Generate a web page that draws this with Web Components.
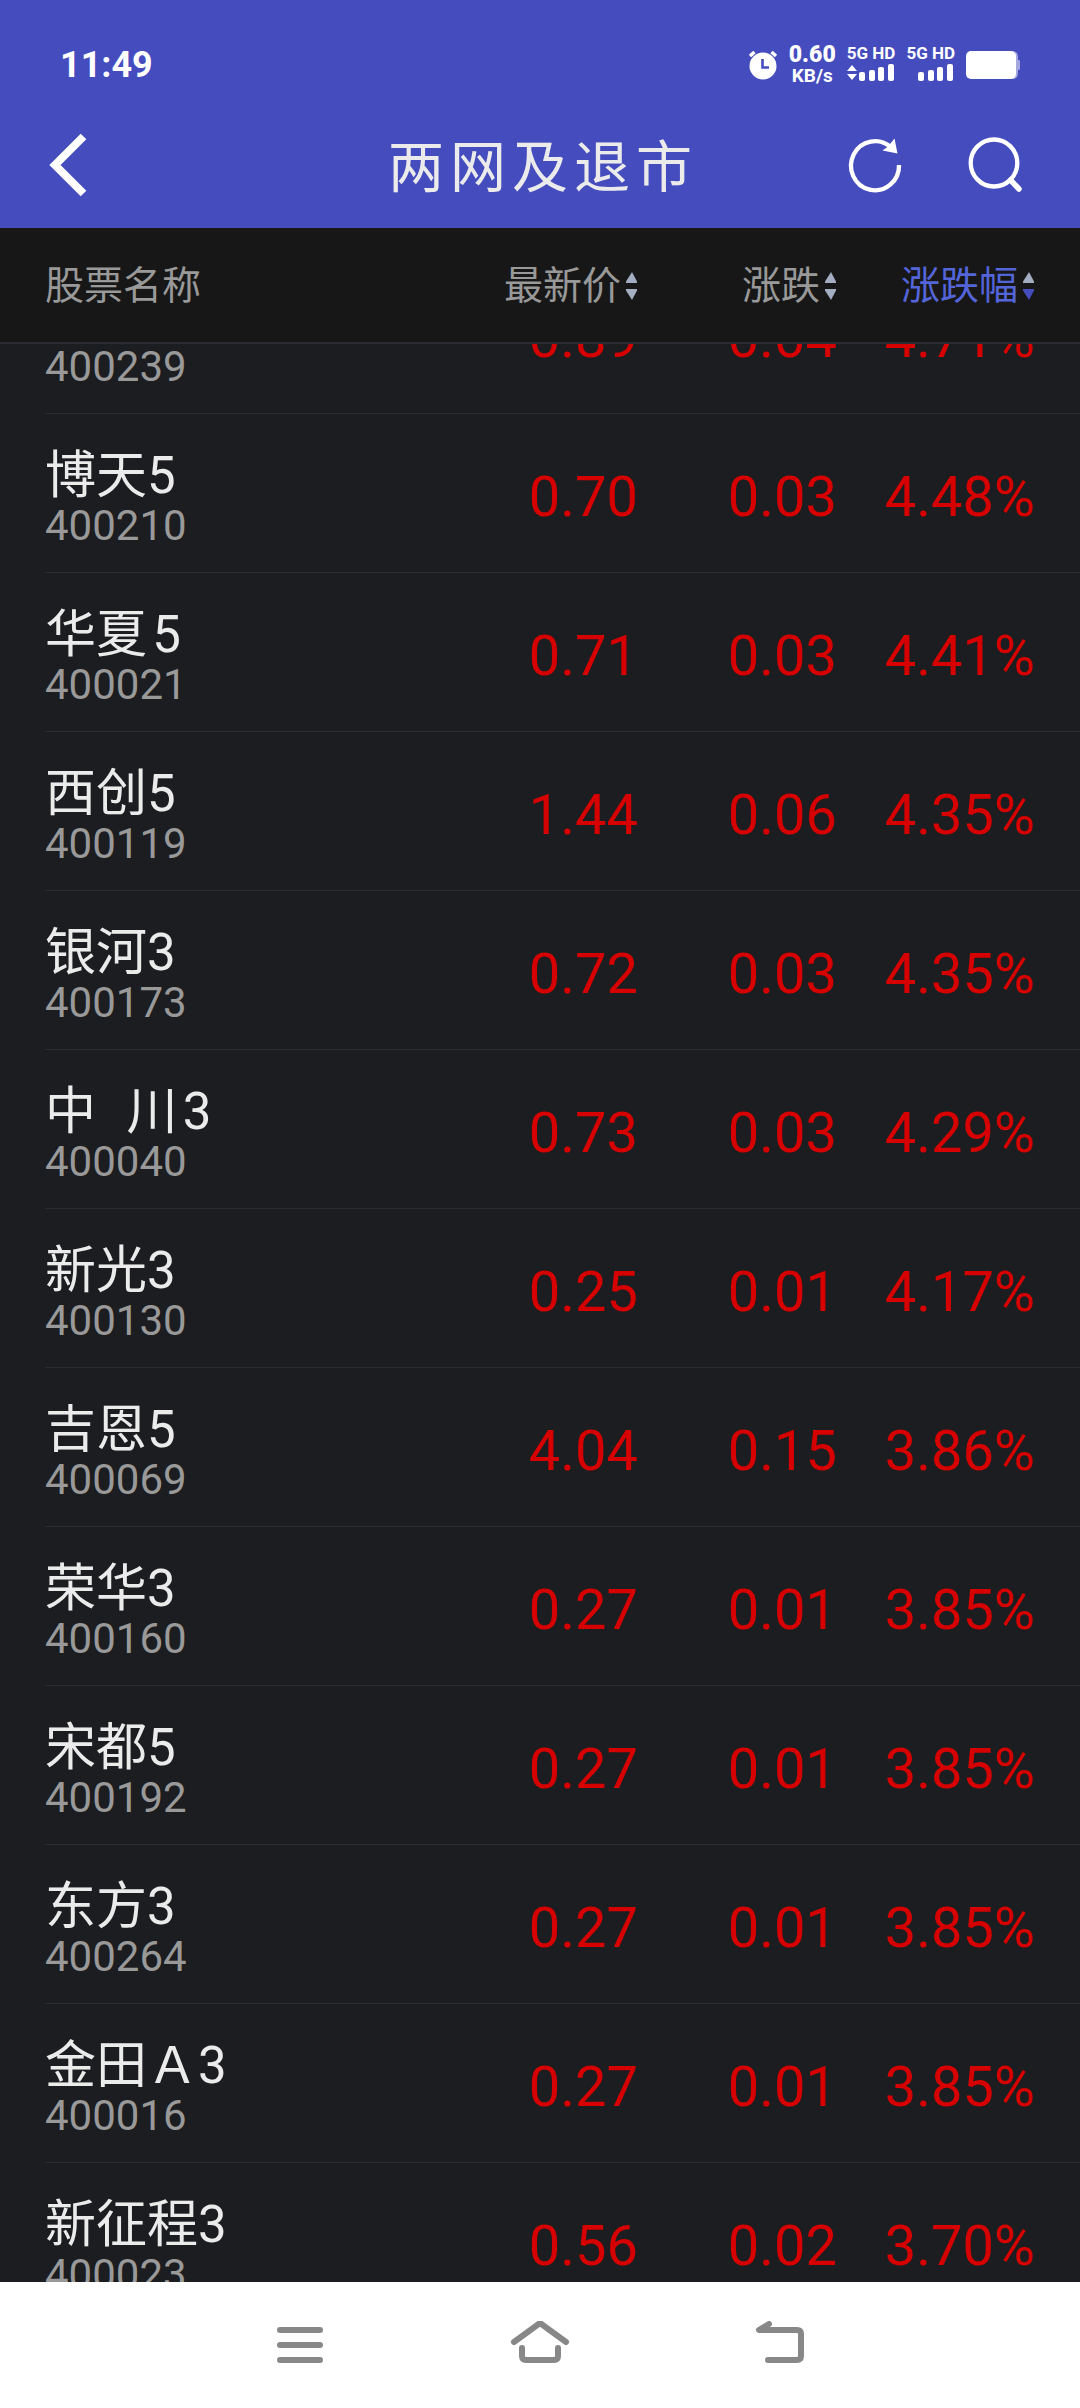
<!DOCTYPE html>
<html lang="zh-CN">
<head>
<meta charset="utf-8">
<meta name="viewport" content="width=device-width, initial-scale=1">
<title>两网及退市</title>
<style>
  :root {
    --color-brand: #444cbe;
    --color-bg: #1c1d20;
    --color-head: #171717;
    --color-line: #2b2c31;
    --color-text: #ebebeb;
    --color-muted: #999999;
    --color-active: #5465d9;
    --color-up: #d60000;
    --color-arrow: #a3aec2;
    --gutter: 45px;
  }

  html,
  body {
    height: 100%;
    margin: 0;
  }

  body {
    background: var(--color-bg);
    font-family: Roboto, "Noto Sans CJK SC", sans-serif;
  }
</style>
</head>
<body>
<market-app>
  <status-bar slot="top" time="11:49" speed="0.60"></status-bar>
  <title-bar slot="top">两网及退市</title-bar>
  <quote-table></quote-table>
  <system-nav slot="bottom"></system-nav>
</market-app>

<script>
class MarketApp extends HTMLElement {
  constructor() {
    super();

    this.attachShadow({ mode: "open" });
    this.shadowRoot.innerHTML = `
        <style>
            :host {
                display: flex;
                flex-direction: column;
                height: 100vh;
            }

            header {
                background: var(--color-brand);
            }

            main {
                flex: 1;
                min-height: 0;
                display: flex;
            }
        </style>

        <header><slot name="top"></slot></header>
        <main><slot></slot></main>
        <slot name="bottom"></slot>
      `;
  }
}

class SignalMeter extends HTMLElement {
  constructor() {
    super();

    this.attachShadow({ mode: "open" });
  }

  connectedCallback() {
    const traffic = this.hasAttribute("traffic")
      ? `<path d="M5 1 L10 7 H0 Z M0 10 H10 L5 16 Z" />`
      : "";

    this.shadowRoot.innerHTML = `
        <style>
            :host {
                display: flex;
                flex-direction: column;
                gap: 2px;
                padding-bottom: 4px;
                font-size: 17px;
                line-height: 17px;
                font-weight: 700;
                white-space: nowrap;
            }

            svg {
                display: block;
                fill: currentColor;
            }
        </style>

        <span>5G HD</span>
        <svg width="48" height="17" viewBox="0 0 48 17" aria-hidden="true">
            ${traffic}
            <rect x="12" y="8" width="6" height="9" rx="2" />
            <rect x="22" y="6" width="6" height="11" rx="2" />
            <rect x="31" y="3" width="6" height="14" rx="2" />
            <rect x="41" y="0" width="6" height="17" rx="2" />
        </svg>
      `;
  }
}

class StatusBar extends HTMLElement {
  constructor() {
    super();

    this.attachShadow({ mode: "open" });
  }

  connectedCallback() {
    this.shadowRoot.innerHTML = `
        <style>
            :host {
                display: flex;
                align-items: center;
                justify-content: space-between;
                padding: 41px 60px 13px;
                height: 48px;
                color: #fff;
            }

            time {
                font-size: 36px;
                line-height: 48px;
                font-weight: 700;
            }

            .icons {
                display: flex;
                align-items: center;
                gap: 11px;
            }

            .speed {
                display: flex;
                flex-direction: column;
                align-items: center;
                font-size: 19px;
                line-height: 20px;
                font-weight: 700;
            }

            .speed b {
                font-size: 23px;
                line-height: 22px;
            }

            svg {
                display: block;
            }
        </style>

        <time>${this.getAttribute("time")}</time>
        <div class="icons">
            <svg width="30" height="30" viewBox="0 0 30 30" aria-hidden="true">
                <circle cx="15" cy="16" r="13.5" fill="#fff" />
                <path d="M2 6 L6.500 2 M28 6 L23.500 2" stroke="#fff" stroke-width="3.500" />
                <path d="M14.500 9 V17.500 H21" fill="none" stroke="#444cbe" stroke-width="2.600" />
            </svg>
            <div class="speed"><b>${this.getAttribute("speed")}</b><span>KB/s</span></div>
            <signal-meter traffic></signal-meter>
            <signal-meter></signal-meter>
            <svg width="54" height="28" viewBox="0 0 54 28" aria-hidden="true">
                <path d="M46 0 Q52 0 52 6 V9 H53 Q54 9 54 11 V17 Q54 19 53 19 H52 V22 Q52 28 46 28 Z" fill="#a4a8df" />
                <rect width="50" height="28" rx="5" fill="#fff" />
            </svg>
        </div>
      `;
  }
}

class TitleBar extends HTMLElement {
  constructor() {
    super();

    this.attachShadow({ mode: "open" });
    this.shadowRoot.innerHTML = `
        <style>
            :host {
                display: grid;
                grid-template-columns: 1fr auto 1fr;
                align-items: center;
                height: 126px;
                padding: 0 var(--gutter);
                box-sizing: border-box;
                color: #fff;
            }

            h1 {
                margin: 0;
                padding: 6px 0 0 6px;
                font-size: 56px;
                line-height: 80px;
                font-weight: 400;
                letter-spacing: 6px;
                color: var(--color-text);
            }

            .actions {
                display: flex;
                justify-content: flex-end;
                gap: 60px;
                padding-right: 10px;
            }

            button {
                display: block;
                padding: 0;
                border: 0;
                background: none;
                color: inherit;
                justify-self: start;
            }

            svg {
                display: block;
                fill: none;
                stroke: currentColor;
            }
        </style>

        <button type="button" aria-label="返回">
            <svg width="60" height="64" viewBox="0 0 60 64">
                <path d="M38.500 3.500 L10 32 L38.500 60.500" stroke-width="8" />
            </svg>
        </button>
        <h1><slot></slot></h1>
        <div class="actions">
            <button type="button" aria-label="刷新">
                <svg width="60" height="60" viewBox="0 2 60 60">
                    <path d="M54 32 A24 24.500 0 1 1 46 14.500" stroke-width="4.300" />
                    <path d="M49.500 5.500 L52.500 20.500 L37.500 17.500 L43 13.500 Z" fill="currentColor" stroke="none" />
                </svg>
            </button>
            <button type="button" aria-label="搜索">
                <svg width="60" height="60" viewBox="0 2 60 60">
                    <ellipse cx="29" cy="30" rx="23.300" ry="23.500" stroke-width="4.300" />
                    <path d="M45.500 47 L54 56" stroke-width="5.500" stroke-linecap="round" />
                </svg>
            </button>
        </div>
      `;
  }
}

class SortLabel extends HTMLElement {
  constructor() {
    super();

    this.attachShadow({ mode: "open" });
    this.shadowRoot.innerHTML = `
        <style>
            :host {
                display: block;
                color: var(--color-muted);
            }

            :host([active]) {
                color: var(--color-active);
                --arrow-down: var(--color-brand);
            }

            button {
                display: flex;
                align-items: center;
                justify-content: flex-end;
                gap: 5px;
                width: 100%;
                padding: 0;
                border: 0;
                background: none;
                color: inherit;
                font: inherit;
            }

            svg {
                display: block;
            }
        </style>

        <button type="button">
            <slot></slot>
            <svg width="12" height="28" viewBox="0 0 12 28" aria-hidden="true">
                <path d="M6 0 L11 9.500 V11 H0 V9.500 Z" fill="var(--color-arrow)" />
                <path d="M6 28 L11 18.500 V17 H0 V18.500 Z" fill="var(--arrow-down, var(--color-arrow))" />
            </svg>
        </button>
      `;
  }
}

class SystemNav extends HTMLElement {
  constructor() {
    super();

    this.attachShadow({ mode: "open" });
    this.shadowRoot.innerHTML = `
        <style>
            :host {
                display: block;
                background: #fff;
            }

            nav {
                display: grid;
                grid-template-columns: repeat(3, 1fr);
                padding: 0 calc(100% / 6);
            }

            button {
                display: flex;
                align-items: center;
                justify-content: center;
                height: 126px;
                padding: 0;
                border: 0;
                background: none;
                color: #888;
            }

            svg {
                fill: none;
                stroke: currentColor;
                stroke-width: 6;
                stroke-linecap: round;
                stroke-linejoin: round;
            }
        </style>

        <nav>
            <button type="button" aria-label="最近任务">
                <svg width="60" height="48" viewBox="0 0 60 48">
                    <path d="M10 9 H50 M10 24 H50 M10 39 H50" />
                </svg>
            </button>
            <button type="button" aria-label="主屏幕">
                <svg width="60" height="48" viewBox="0 0 60 48">
                    <path d="M4 21 L30 2 L56 21" />
                    <path d="M12 27 V35 Q12 39 16 39 H44 Q48 39 48 35 V27" />
                </svg>
            </button>
            <button type="button" aria-label="返回">
                <svg width="60" height="48" viewBox="0 0 60 48">
                    <path d="M19 3 L9 9 H47 Q51 9 51 13 V35 Q51 39 47 39 H18" />
                </svg>
            </button>
        </nav>
      `;
  }
}

const QUOTES = [
  ["\u00a0", "400239", "0.89", "0.04", "4.71%"],
  ["博天5", "400210", "0.70", "0.03", "4.48%"],
  ["华夏\u200a5", "400021", "0.71", "0.03", "4.41%"],
  ["西创5", "400119", "1.44", "0.06", "4.35%"],
  ["银河3", "400173", "0.72", "0.03", "4.35%"],
  ["中\u00a0 \u200a川\u200a3", "400040", "0.73", "0.03", "4.29%"],
  ["新光3", "400130", "0.25", "0.01", "4.17%"],
  ["吉恩5", "400069", "4.04", "0.15", "3.86%"],
  ["荣华3", "400160", "0.27", "0.01", "3.85%"],
  ["宋都5", "400192", "0.27", "0.01", "3.85%"],
  ["东方3", "400264", "0.27", "0.01", "3.85%"],
  ["金田Ａ3", "400016", "0.27", "0.01", "3.85%"],
  ["新征程3", "400023", "0.56", "0.02", "3.70%"],
];

class QuoteTable extends HTMLElement {
  constructor() {
    super();

    this.attachShadow({ mode: "open" });
  }

  connectedCallback() {
    this.render();
    // the list opens part-way through its first row
    this.scrollTop = 89;
  }

  row([name, code, price, change, percent]) {
    return `
            <tr>
                <td class="stock">
                    <div class="name">${name}</div>
                    <div class="code">${code}</div>
                </td>
                <td>${price}</td>
                <td>${change}</td>
                <td>${percent}</td>
            </tr>`;
  }

  render() {
    this.shadowRoot.innerHTML = `
        <style>
            :host {
                display: block;
                flex: 1;
                min-width: 0;
                overflow-y: auto;
                scrollbar-width: none;
                background: var(--color-bg);
            }

            table {
                width: 100%;
                table-layout: fixed;
                border-spacing: 0;
            }

            .col-price {
                width: 240px;
            }

            .col-change {
                width: 199px;
            }

            .col-percent {
                width: 243px;
            }

            th {
                position: sticky;
                top: 0;
                height: 116px;
                box-sizing: border-box;
                padding: 2px 0 0;
                border-bottom: 2px solid #2b2b34;
                background: var(--color-head);
                color: var(--color-muted);
                font-size: 39px;
                line-height: 48px;
                font-weight: 400;
                text-align: left;
            }

            tbody tr {
                background: linear-gradient(var(--color-line), var(--color-line)) var(--gutter) 100% / 100% 1px no-repeat;
            }

            td {
                height: 159px;
                box-sizing: border-box;
                padding: 7px 0 0;
                color: var(--color-up);
                font-size: 56px;
                line-height: 64px;
                text-align: right;
                vertical-align: middle;
            }

            th:first-child,
            .stock {
                padding-left: var(--gutter);
            }

            th:last-child,
            td:last-child {
                padding-right: var(--gutter);
            }

            .stock {
                padding-top: 13px;
                text-align: left;
            }

            .name {
                font-size: 51px;
                line-height: 52px;
                color: var(--color-text);
                white-space: pre;
            }

            .code {
                font-size: 42px;
                line-height: 48px;
                color: var(--color-muted);
            }
        </style>

        <table>
            <colgroup>
                <col>
                <col class="col-price">
                <col class="col-change">
                <col class="col-percent">
            </colgroup>
            <thead>
                <tr>
                    <th scope="col">股票名称</th>
                    <th scope="col"><sort-label>最新价</sort-label></th>
                    <th scope="col"><sort-label>涨跌</sort-label></th>
                    <th scope="col" aria-sort="descending"><sort-label active>涨跌幅</sort-label></th>
                </tr>
            </thead>
            <tbody>${QUOTES.map(this.row).join("")}
            </tbody>
        </table>
      `;
  }
}

customElements.define("market-app", MarketApp);
customElements.define("signal-meter", SignalMeter);
customElements.define("status-bar", StatusBar);
customElements.define("title-bar", TitleBar);
customElements.define("system-nav", SystemNav);
customElements.define("sort-label", SortLabel);
// last, so the bars around it already have their height when it scrolls
customElements.define("quote-table", QuoteTable);
</script>
</body>
</html>
